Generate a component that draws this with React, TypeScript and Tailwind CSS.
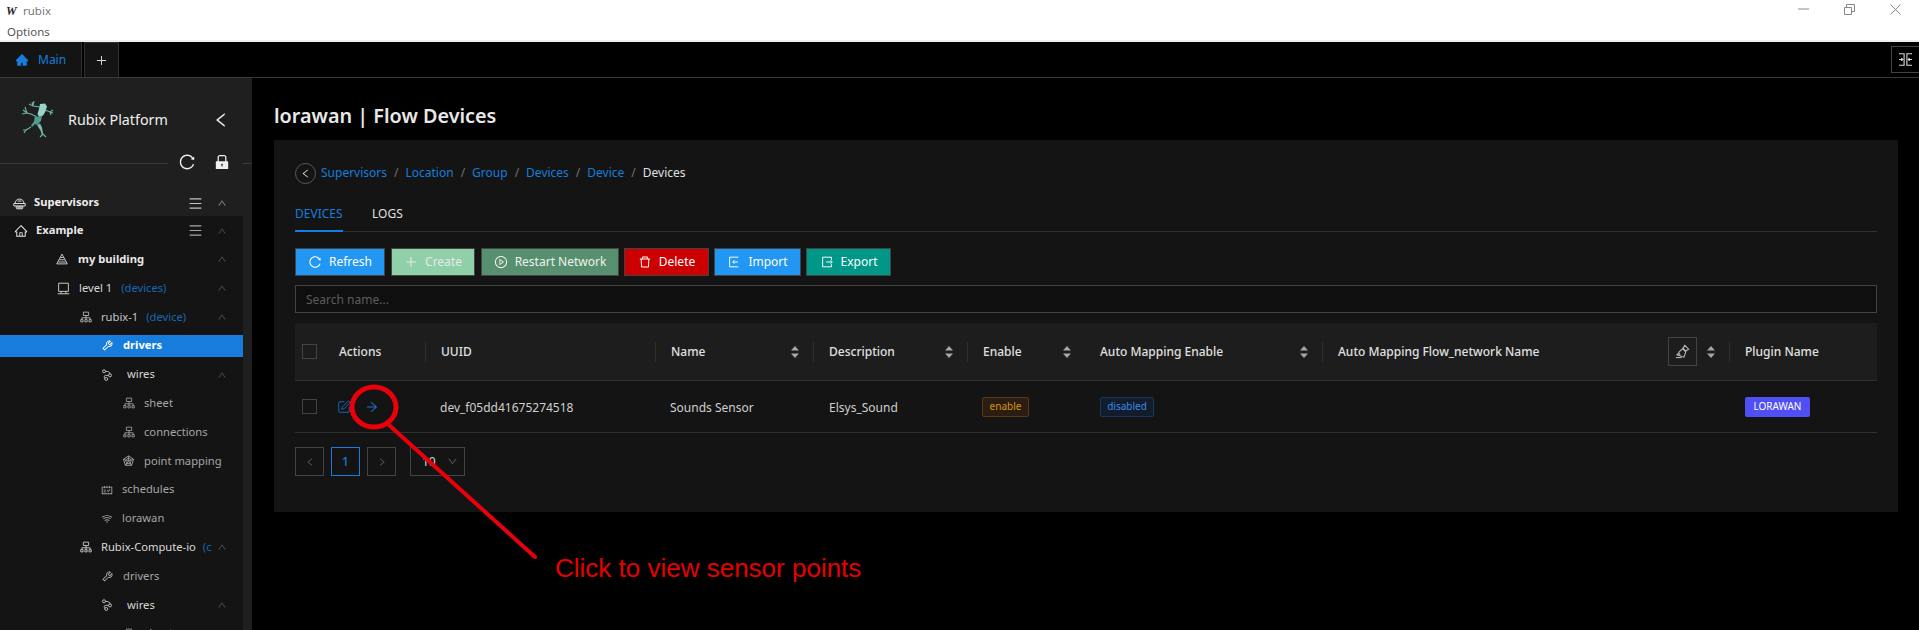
import React from "react";
import { SquarePen } from "lucide-react";
import {
  AiFillHome, AiFillLock, AiOutlineArrowRight, AiOutlineDelete, AiOutlineDown, AiOutlineHome,
  AiOutlineLeft, AiOutlineMenu, AiOutlinePlayCircle, AiOutlinePlus, AiOutlineRadarChart,
  AiOutlineReload, AiOutlineRight, AiOutlineSchedule, AiOutlineTool, AiOutlineUp, AiOutlineWifi,
} from "react-icons/ai";

type IconProps = { className?: string };

function Svg16({ className, children }: IconProps & { children: React.ReactNode }) {
  return (
    <svg viewBox="0 0 16 16" width="1em" height="1em" fill="none" stroke="currentColor" strokeWidth="1.1" className={className}>
      {children}
    </svg>
  );
}

const SiteMap = ({ className }: IconProps) => (
  <Svg16 className={className}>
    <path d="M4.5 1.5h7v4.5h-7zM8 6v3M2.5 11V9h11v2M8 9v2M1 11.5h3v3H1zM6.5 11.5h3v3h-3zM12 11.5h3v3h-3z" />
  </Svg16>
);
const Pyramid = ({ className }: IconProps) => (
  <Svg16 className={className}>
    <path d="M8 1.5L15 14.5H1zM6 6h4M4.6 9h6.8M3.2 12h9.6" />
  </Svg16>
);
const Monitor = ({ className }: IconProps) => (
  <Svg16 className={className}>
    <path d="M2 1.5h12v10H2zM.8 14.5h14.4M5 11.5v3M11 11.5v3" />
  </Svg16>
);
const Wires = ({ className }: IconProps) => (
  <Svg16 className={className}>
    <circle cx="4" cy="3" r="2" />
    <circle cx="12" cy="8.5" r="2" />
    <circle cx="7" cy="13.3" r="2" />
    <path d="M6 3.2c4 0 6 1 6 3.3M10 8.5H6c-2 0-2 3 -1 4.2" />
  </Svg16>
);
const RobotHead = ({ className }: IconProps) => (
  <Svg16 className={className}>
    <path d="M2.5 8a5.5 5.5 0 0 1 11 0M1 8h14v3H1zM4 11v2.5a1 1 0 0 0 1 1h6a1 1 0 0 0 1-1V11M5.5 5h5M6 11v3M10 11v3" />
    <circle cx="8" cy="12.5" r="1" />
  </Svg16>
);
const Broom = ({ className }: IconProps) => (
  <Svg16 className={className}>
    <path d="M10.5 1.5l4 4-3 2-3-3zM8 5l3.5 3.5-2 5.5L2 11.5l1-1 2 .5-1-2z" />
    <path d="M1 14.5h6" />
  </Svg16>
);
const ImportIc = ({ className }: IconProps) => (
  <Svg16 className={className}>
    <path d="M13 2.5H3v11h10M12.5 8H6.5M8.5 6L6.5 8l2 2" />
  </Svg16>
);
const ExportIc = ({ className }: IconProps) => (
  <Svg16 className={className}>
    <path d="M13 5.5v-3H3v11h10v-3M7 8h7M12 6l2 2-2 2" />
  </Svg16>
);
const CompressIc = ({ className }: IconProps) => (
  <svg viewBox="0 0 16 14" width="15" height="13" fill="none" stroke="currentColor" strokeWidth="1.2" className={className}>
    <path d="M1 .8h5.5v12.4H1M15 .8H9.5v12.4H15M1 7h4M3.5 5.5L5 7 3.5 8.500M15 7h-4M12.500 5.500L11 7l1.500 1.500" />
  </svg>
);

function Frog() {
  return (
    <svg viewBox="0 0 32 37" className="w-8 h-[37px]">
      <path d="M18 3l5-.5 2 3-1.500 5-2.500 4-4 1.500-1.500-3 1.500-5z" fill="#9ad3c8" />
      <path d="M13 14l3 2 4-1-1 5-4 4-2-1-3 3-1-1.500 3-4z" fill="#4f9c90" />
      <path d="M15 24l3-1.500 2 4 1 6-1 2-1.500-5z" fill="#79bcb0" />
      <path d="M1 9l4 3 4 1 4 2M3 6l2 6M0 13l5-1M10 1l1 4 7 1M7 3l4 2M12 0l-1 5M23 9l5 2 3-2M28 11l3 1M28 11l1 3M9 26l-5 3-2 3M4 29l-3 0M21 33l-3 3M21 33l3 3" stroke="#6db3a7" strokeWidth="1.100" fill="none" />
    </svg>
  );
}

function WinControls() {
  return (
    <div className="flex items-center mb-[4px]">
      <svg width="11" height="2" className="mr-[35px]"><path d="M0 1h11" stroke="#888" /></svg>
      <svg width="11" height="11" className="mr-[35px]" fill="none" stroke="#888"><path d="M.5 3.5h7v7h-7zM2.500 3V.5h8v7H8" /></svg>
      <svg width="11" height="11" className="mr-[18px]" fill="none" stroke="#888"><path d="M.5.5l10 10M10.500.5l-10 10" /></svg>
    </div>
  );
}

type Row = {
  icon: React.ComponentType<IconProps>;
  text: string;
  extra?: string;
  iconX: string;
  gap: string;
  cls?: string;
  chevron?: boolean;
  active?: boolean;
  size?: string;
  extraGap?: string;
};

const rows: Row[] = [
  { icon: Pyramid, text: "my building", iconX: "pl-[56px]", gap: "gap-[10px]", cls: "font-bold text-[#e8e8e8]", chevron: true, size: "text-[12px]" },
  { icon: Monitor, text: "level 1", extra: "(devices)", iconX: "pl-[57px]", gap: "gap-[9px]", cls: "text-[#d9d9d9]", chevron: true, size: "text-[13px]", extraGap: "ml-[9px]" },
  { icon: SiteMap, text: "rubix-1", extra: "(device)", iconX: "pl-[80px]", gap: "gap-[9px]", cls: "text-[#c4c4c4]", chevron: true, size: "text-[12px]", extraGap: "ml-[8px]" },
  { icon: AiOutlineTool, text: "drivers", iconX: "pl-[101px]", gap: "gap-[9px]", cls: "font-bold text-white", active: true, size: "text-[13px]" },
  { icon: Wires, text: "wires", iconX: "pl-[101px]", gap: "gap-[14px]", cls: "text-[#d9d9d9]", chevron: true, size: "text-[12px]" },
  { icon: SiteMap, text: "sheet", iconX: "pl-[123px]", gap: "gap-[9px]", cls: "text-[#a6a6a6]", size: "text-[12px]" },
  { icon: SiteMap, text: "connections", iconX: "pl-[123px]", gap: "gap-[9px]", cls: "text-[#a6a6a6]", size: "text-[12px]" },
  { icon: AiOutlineRadarChart, text: "point mapping", iconX: "pl-[122px]", gap: "gap-[9px]", cls: "text-[#a6a6a6]", size: "text-[13px]" },
  { icon: AiOutlineSchedule, text: "schedules", iconX: "pl-[101px]", gap: "gap-[9px]", cls: "text-[#a6a6a6]", size: "text-[12px]" },
  { icon: AiOutlineWifi, text: "lorawan", iconX: "pl-[101px]", gap: "gap-[9px]", cls: "text-[#a6a6a6]", size: "text-[12px]" },
  { icon: SiteMap, text: "Rubix-Compute-io", extra: "(c", iconX: "pl-[80px]", gap: "gap-[9px]", cls: "text-[#d9d9d9]", chevron: true, size: "text-[12px]", extraGap: "ml-[7px]" },
  { icon: AiOutlineTool, text: "drivers", iconX: "pl-[101px]", gap: "gap-[9px]", cls: "text-[#a6a6a6]", size: "text-[13px]" },
  { icon: Wires, text: "wires", iconX: "pl-[101px]", gap: "gap-[14px]", cls: "text-[#d9d9d9]", chevron: true, size: "text-[12px]" },
  { icon: SiteMap, text: "sheet", iconX: "pl-[123px]", gap: "gap-[9px]", cls: "text-[#a6a6a6]", size: "text-[12px]" },
];

function Sidebar() {
  return (
    <aside className="w-[252px] shrink-0 bg-[#1f1f1f] overflow-hidden text-[11.2px]">
      <div className="h-[112px]">
        <div className="h-[83px] flex items-center pl-[22px]">
          <Frog />
          <span className="ml-[14px] w-[144px] text-[14.3px] text-[#f0f0f0]">Rubix Platform</span>
          <AiOutlineLeft className="text-[#f0f0f0] text-[18px]" />
        </div>
      </div>
      <div className="relative h-0">
        <div className="absolute left-0 right-0 top-[-27px] h-px flex">
          <div className="w-[168px] bg-[#3a3a3a]" />
          <div className="w-[75px]" />
          <div className="w-[9px] bg-[#3a3a3a]" />
        </div>
        <div className="absolute left-[178px] top-[-37px] flex items-center gap-[17px] text-[#f0f0f0]">
          <AiOutlineReload className="text-[18px]" />
          <AiFillLock className="text-[18px]" />
        </div>
      </div>
      <div className="h-[26px] flex items-center pl-[13px] pr-[25px] font-bold text-[#f0f0f0]">
        <RobotHead className="text-[13px] mr-[8px]" />
        <span className="mb-[2px]">Supervisors</span>
        <AiOutlineMenu className="ml-auto text-[#c4c4c4] text-[15px] mr-[14px]" />
        <AiOutlineUp className="text-[#a6a6a6] text-[10px]" />
      </div>
      <div className="w-[243px] bg-[#141414] h-[414px]">
        <div className="h-[29px] flex items-center pl-[14px] pr-[16px] font-bold text-[#e8e8e8]">
          <AiOutlineHome className="text-[14px] mr-[8px]" />
          <span>Example</span>
          <AiOutlineMenu className="ml-auto text-[#a6a6a6] text-[15px] mr-[14px]" />
          <AiOutlineUp className="text-[#595959] text-[10px]" />
        </div>
        {rows.map((r, i) => {
          const Icon = r.icon;
          return (
            <div
              key={i}
              className={`flex items-center pr-[16px] ${r.iconX} ${r.active ? "h-[22px] my-[3.4px] bg-[#177ddc]" : "h-[28.8px]"}`}
            >
              <div className={`flex items-center shrink-0 whitespace-nowrap ${r.gap}`}>
                <Icon className={`shrink-0 ${r.size} ${r.cls}`} />
                <span className={r.cls}>{r.text}</span>
              </div>
              {r.extra && (
                <span className={`${r.extraGap} text-[#1668b5] overflow-hidden whitespace-nowrap`}>{r.extra}</span>
              )}
              {r.chevron && <AiOutlineUp className="ml-auto shrink-0 text-[#595959] text-[10px]" />}
            </div>
          );
        })}
      </div>
    </aside>
  );
}

function Btn({ icon: Icon, label, cls, w }: { icon: React.ComponentType<IconProps>; label: string; cls: string; w: string }) {
  return (
    <div className={`h-7 flex items-center justify-center gap-[7px] border border-[#434343] text-[12px] ${cls} ${w}`}>
      <Icon className="text-[14px]" />
      <span>{label}</span>
    </div>
  );
}

function Sort() {
  return (
    <svg width="8" height="12" viewBox="0 0 8 12" className="shrink-0" fill="#a6a6a6">
      <path d="M4 0l4 4.500H0zM4 12L0 7.500h8z" />
    </svg>
  );
}

function Sep() {
  return <div className="w-px h-5 bg-[#303030] shrink-0" />;
}

function HeadCell({ label, sort, children }: { label: string; sort?: boolean; children?: React.ReactNode }) {
  return (
    <div className="flex items-center pr-[14px]">
      <Sep />
      <span className="ml-[15px] whitespace-nowrap font-medium pt-px">{label}</span>
      {children}
      {sort && <div className="ml-auto"><Sort /></div>}
    </div>
  );
}

const tableCols = "grid grid-cols-[35px_95px_230px_158px_154px_118px_237px_407px_148px]";

function DeviceTable() {
  return (
    <div className="mt-[10px] text-[12px]">
      <div className={`${tableCols} h-[58px] bg-[#1d1d1d] border-b border-[#303030] text-[#e0e0e0]`}>
        <div className="flex items-center pl-[7px]"><div className="w-[15px] h-[15px] border border-[#434343]" /></div>
        <div className="flex items-center pl-[9px] pt-px font-medium">Actions</div>
        <HeadCell label="UUID" />
        <HeadCell label="Name" sort />
        <HeadCell label="Description" sort />
        <HeadCell label="Enable" sort />
        <div className="flex items-center pl-[15px] pr-[14px]">
          <span className="font-medium whitespace-nowrap pt-px">Auto Mapping Enable</span>
          <div className="ml-auto"><Sort /></div>
        </div>
        <HeadCell label="Auto Mapping Flow_network Name" sort>
          <div className="ml-[129px] w-[29px] h-[29px] border border-[#434343] flex items-center justify-center">
            <Broom className="text-[15px] text-[#bfbfbf]" />
          </div>
        </HeadCell>
        <HeadCell label="Plugin Name" />
      </div>
      <div className={`${tableCols} h-[52px] border-b border-[#303030] text-[#d0d0d0] items-center`}>
        <div className="pl-[7px]"><div className="w-[15px] h-[15px] border border-[#434343]" /></div>
        <div className="pl-[7px] flex items-center gap-[14px] text-[#1a74c9]">
          <SquarePen size={14} strokeWidth={1.500} />
          <AiOutlineArrowRight className="text-[14px]" />
        </div>
        <div className="pl-[15px] pt-[2px]">dev_f05dd41675274518</div>
        <div className="pl-[15px] pt-[2px]">Sounds Sensor</div>
        <div className="pl-[16px] pt-[2px]">Elsys_Sound</div>
        <div className="pl-[15px]">
          <span className="inline-flex items-center justify-center h-5 w-[47px] text-[10px] text-[#d89614] bg-[#2b1d11] border border-[#593815] rounded-[2px]">enable</span>
        </div>
        <div className="pl-[15px]">
          <span className="inline-flex items-center justify-center h-5 w-[54px] text-[10px] text-[#3c89e8] bg-[#111d2c] border border-[#15395b] rounded-[2px]">disabled</span>
        </div>
        <div />
        <div className="pl-[16px]">
          <span className="inline-flex items-center justify-center h-5 w-[65px] text-[10px] text-white bg-[#4f4ff5] rounded-[2px]">LORAWAN</span>
        </div>
      </div>
    </div>
  );
}

function Pagination() {
  const box = "w-[29px] h-[29px] border flex items-center justify-center";
  return (
    <div className="mt-[14px] flex items-center text-[12px]">
      <div className={`${box} border-[#434343] text-[#595959]`}><AiOutlineLeft className="text-[10px]" /></div>
      <div className={`${box} ml-[7px] border-[#177ddc] text-[#177ddc] font-medium`}>1</div>
      <div className={`${box} ml-[7px] border-[#434343] text-[#595959]`}><AiOutlineRight className="text-[10px]" /></div>
      <div className="ml-[14px] w-[55px] h-[29px] border border-[#434343] flex items-center pl-[11px] text-[#d9d9d9]">
        10
        <AiOutlineDown className="ml-[11px] text-[11px] text-[#595959]" />
      </div>
    </div>
  );
}

function Annotation() {
  return (
    <>
      <svg className="absolute left-0 top-0 pointer-events-none" width="1919" height="630">
        <ellipse cx="374" cy="407" rx="22" ry="20" fill="none" stroke="#e8000b" strokeWidth="5" />
        <path d="M389 425L535 557" stroke="#e8000b" strokeWidth="4" strokeLinecap="round" />
      </svg>
      <div className="absolute left-[555px] top-[554px] text-[26px] leading-[28px] text-[#e60000] whitespace-nowrap font-['Liberation_Sans',sans-serif]">
        Click to view sensor points
      </div>
    </>
  );
}

export default function App() {
  return (
    <div className="relative w-[1919px] h-[630px] overflow-hidden bg-black font-['Noto_Sans','Open_Sans',sans-serif]">
      <header className="h-[42px] bg-white border-b-2 border-[#f0f0f0] text-[12px] text-[#555]">
        <div className="h-[22px] flex items-center justify-between">
          <div className="flex items-center pl-[6px]">
            <span className="font-['Liberation_Serif',serif] font-bold italic text-[#222] text-[12px] w-[17px]">W</span>
            <span className="text-[#777] text-[11.5px]">rubix</span>
          </div>
          <WinControls />
        </div>
        <div className="pl-[7px] pt-px leading-[17px] text-[11.5px]">Options</div>
      </header>
      <div className="h-[36px] flex border-b border-[#3a3a3a] bg-black">
        <div className="w-[82px] bg-[#141414] border-r border-[#303030] flex items-center pl-[15px] gap-[9px] text-[#177ddc] text-[12px]">
          <AiFillHome className="text-[14px]" />
          <span>Main</span>
        </div>
        <div className="ml-[2px] w-[35px] bg-[#141414] border-x border-t border-[#303030] flex items-center justify-center text-[#d9d9d9]">
          <AiOutlinePlus className="text-[13px]" />
        </div>
        <div className="ml-auto mt-[4px] mb-[4px] w-[28px] border-l border-y border-[#434343] flex items-center justify-center text-[#d9d9d9]">
          <CompressIc />
        </div>
      </div>
      <div className="flex h-[552px]">
        <Sidebar />
        <main className="flex-1 pl-[22px] pr-[21px]">
          <h1 className="h-[62px] pt-[23px] text-[19.8px] leading-[30px] font-semibold text-[#e8e8e8]">lorawan | Flow Devices</h1>
          <section className="h-[372px] bg-[#141414] px-[21px]">
            <div className="h-[50px] pt-[16px] flex items-center text-[12px] text-[#177ddc] whitespace-nowrap">
              <div className="w-[21px] h-[21px] rounded-full border border-[#595959] flex items-center justify-center text-[#d9d9d9] mr-[5px]">
                <AiOutlineLeft className="text-[11px]" />
              </div>
              <span>Supervisors</span><span className="mx-[7px] text-[#737373]">/</span>
              <span>Location</span><span className="mx-[7px] text-[#737373]">/</span>
              <span>Group</span><span className="mx-[7px] text-[#737373]">/</span>
              <span>Devices</span><span className="mx-[7px] text-[#737373]">/</span>
              <span>Device</span><span className="mx-[7px] text-[#737373]">/</span>
              <span className="text-[#e0e0e0]">Devices</span>
            </div>
            <div className="mt-[9px] h-[33px] border-b border-[#303030] flex text-[12px]">
              <div className="w-[48px] h-[33px] border-b-2 border-[#177ddc] text-[#177ddc] flex items-center pb-[2px]">DEVICES</div>
              <div className="ml-[29px] h-[32px] text-[#e0e0e0] flex items-center pb-[3px]">LOGS</div>
            </div>
            <div className="mt-[16px] flex gap-[5px]">
              <Btn icon={AiOutlineReload} label="Refresh" cls="bg-[#2196f3] text-white" w="w-[90px]" />
              <Btn icon={AiOutlinePlus} label="Create" cls="bg-[#8fd0a9] text-[#e8e8e8] ml-px" w="w-[84px]" />
              <Btn icon={AiOutlinePlayCircle} label="Restart Network" cls="bg-[#56906e] text-[#f0f0f0] ml-px" w="w-[138px]" />
              <Btn icon={AiOutlineDelete} label="Delete" cls="bg-[#cc0000] text-white" w="w-[85px]" />
              <Btn icon={ImportIc} label="Import" cls="bg-[#2196f3] text-white" w="w-[87px]" />
              <Btn icon={ExportIc} label="Export" cls="bg-[#009688] text-white" w="w-[85px]" />
            </div>
            <div className="mt-[9px] h-[28px] border border-[#434343] bg-[#0f0f0f] flex items-center pl-[10px] pt-px text-[12px] text-[#5e5e5e]">Search name...</div>
            <DeviceTable />
            <Pagination />
          </section>
        </main>
      </div>
      <Annotation />
    </div>
  );
}
